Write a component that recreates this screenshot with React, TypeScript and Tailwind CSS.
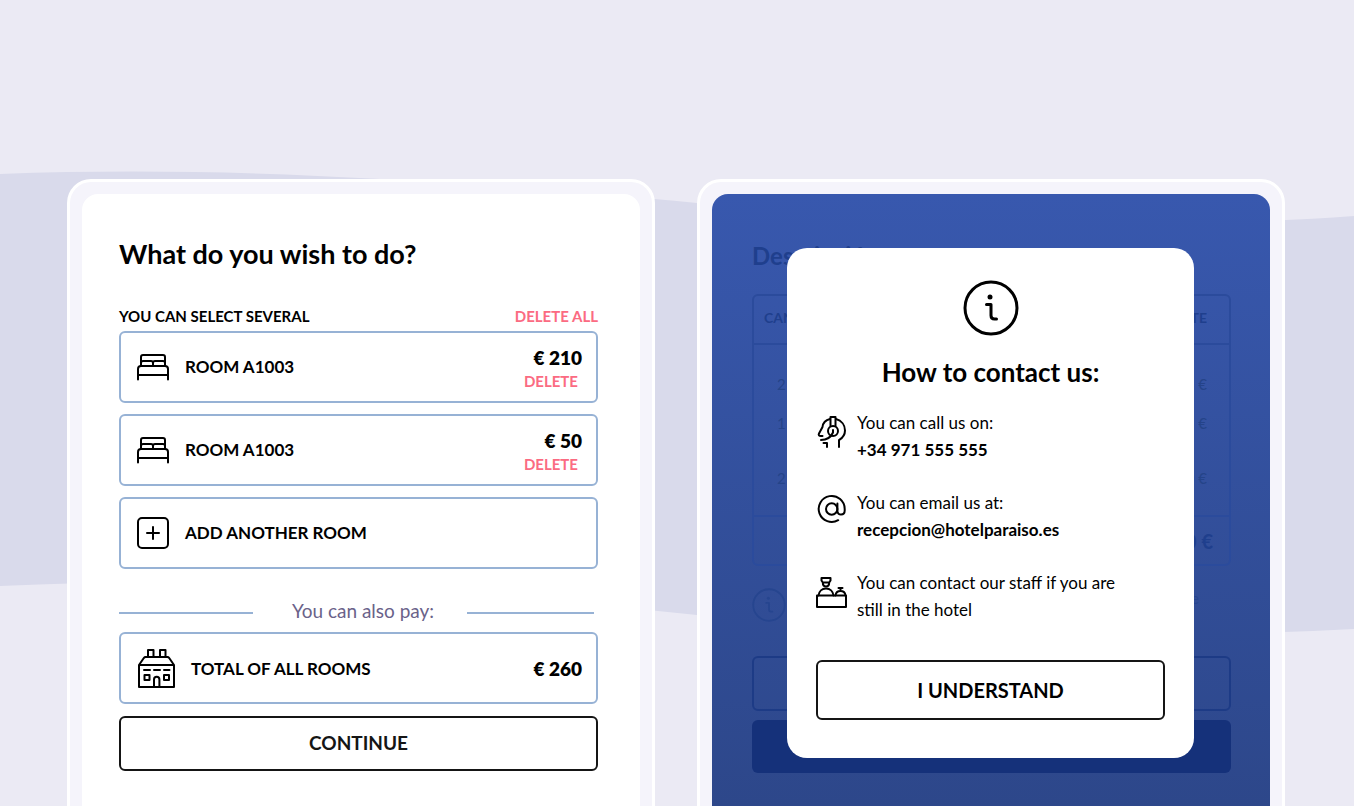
import React from "react";

type IconProps = { className?: string };

const stroke = {
  fill: "none",
  stroke: "currentColor",
  strokeWidth: 2,
  strokeLinecap: "round" as const,
  strokeLinejoin: "round" as const,
};

const BedIcon = ({ className }: IconProps) => (
  <svg viewBox="0 0 34 30" className={className} {...stroke} aria-hidden="true">
    <path d="M5 13.5V5a2 2 0 0 1 2-2h20a2 2 0 0 1 2 2v8.5" />
    <path d="M5 11a2 2 0 0 1 2-2h8a2 2 0 0 1 2 2v2.500M17 11a2 2 0 0 1 2-2h8a2 2 0 0 1 2 2" />
    <path d="M2 27.500V17a3 3 0 0 1 3-3h24a3 3 0 0 1 3 3v10.500M2 23h30" />
  </svg>
);

const HouseIcon = ({ className }: IconProps) => (
  <svg viewBox="0 0 42 42" className={className} {...stroke} aria-hidden="true">
    <path d="M3 17h35v22H3zM3 17l5-7.200a2 2 0 0 1 1.500-.8h22a2 2 0 0 1 1.500.8L38 17" />
    <path d="M12 9V2h5.500v7M24 9V2h5.500v7" />
    <path d="M8 22h6M18 22h6M28 22h5.500" />
    <path d="M8.500 27h5v5h-5zM28 27h5v5h-5z" />
    <path d="M18 39v-7.500a2.700 2.700 0 0 1 5.400 0V39" />
  </svg>
);

const HeadsetIcon = ({ className }: IconProps) => (
  <svg viewBox="0 0 32 36" className={className} {...stroke} aria-hidden="true">
    <path d="M14.500 13V4h5v9" />
    <circle cx="17" cy="18" r="5" />
    <path d="M17 17v2.500c-2 4.500-6.500 7.500-12 7.500" />
    <path d="M14 6C9.500 7 7 10 6.500 14L3 20.500c-.8 1.600 0 2.500 2 2.500h1.500" />
    <path d="M20 6c5.500 1.500 9 6 9 11.500 0 4.500-2.500 7.500-6 9.700V34" />
    <path d="M7.500 30H11v4" />
  </svg>
);

const AtIcon = ({ className }: IconProps) => (
  <svg viewBox="0 0 32 32" className={className} {...stroke} aria-hidden="true">
    <circle cx="15.700" cy="16" r="5.700" />
    <path d="M21.400 10.500V18c0 4.800 7.300 4.800 7.300-.5V16a13 13 0 1 0-6.500 11.200" />
  </svg>
);

const ReceptionIcon = ({ className }: IconProps) => (
  <svg viewBox="0 0 32 34" className={className} {...stroke} aria-hidden="true">
    <path d="M1 20.500h29V32H1z" />
    <path d="M5.500 3h9v2.500l-1.300 2H6.800l-1.300-2zM6.800 7.500c0 2.500 1.200 4 3.200 4s3.200-1.500 3.200-4" />
    <path d="M2.500 20.500c.5-4.200 3.500-7 7.500-7s7 2.800 7.500 7" />
    <path d="M19.500 20.500c.3-2.700 2-4.500 5-4.500s4.700 1.800 5 4.500M22.500 13h4M24.500 13v3" />
  </svg>
);

const InfoIcon = ({ className }: IconProps) => (
  <svg viewBox="0 0 56 56" className={className} {...stroke} strokeWidth={3} aria-hidden="true">
    <circle cx="28" cy="28" r="26" />
    <circle cx="27" cy="17" r="2.500" fill="currentColor" stroke="none" />
    <path d="M23.500 24.500H28v11c0 2.500 1 3.500 3.500 3.500h2" />
  </svg>
);

const PlusSquareIcon = ({ className }: IconProps) => (
  <svg viewBox="0 0 34 34" className={className} {...stroke} aria-hidden="true">
    <rect x="2" y="2" width="30" height="30" rx="4" />
    <path d="M17 11v12M11 17h12" />
  </svg>
);

const Waves = () => (
  <svg
    viewBox="0 0 1354 806"
    preserveAspectRatio="none"
    className="absolute inset-0 -z-10 h-full w-full"
    aria-hidden="true"
  >
    <path
      fill="#d9daeb"
      d="M0 174C130 169 260 172 380 179C500 186 600 194 697 203C900 221 1150 231 1354 216V629C1150 640 900 634 697 615C480 592 240 575 0 586Z"
    />
  </svg>
);

const Frame = ({ children }: { children: React.ReactNode }) => (
  <div className="flex min-w-0 flex-col rounded-t-3xl border-3 border-b-0 border-white bg-[#f5f4fb] px-3 pt-3">
    {children}
  </div>
);

const rooms = [
  { id: 1, name: "ROOM A1003", price: "€ 210" },
  { id: 2, name: "ROOM A1003", price: "€ 50" },
];

const lines = [
  { qty: "2", amount: "25 €", height: "h-[60px]" },
  { qty: "1", amount: "15 €", height: "h-[38px]" },
  { qty: "2", amount: "20 €", height: "h-[74px]" },
];

const RoomsPanel = () => (
  <main className="flex-1 rounded-t-2xl bg-white pt-11 pr-[42px] pl-[37px]">
    <h1 className="text-[27px] leading-8 font-bold">What do you wish to do?</h1>

    <div className="mt-9 flex items-center justify-between leading-5">
      <h2 className="text-[15px] leading-5 font-bold">YOU CAN SELECT SEVERAL</h2>
      <button className="text-[15px] font-bold text-[#fb6b82]">DELETE ALL</button>
    </div>

    <ul className="mt-[5px] flex flex-col gap-[11px]">
      {rooms.map((room) => (
        <li
          key={room.id}
          className="flex h-[72px] items-center rounded-md border-2 border-[#97b2d5] pr-[14px] pl-[15px]"
        >
          <BedIcon className="h-[30px] w-[34px]" />
          <span className="ml-[15px] text-[17px] font-bold">{room.name}</span>
          <div className="ml-auto flex flex-col items-end pt-1">
            <span className="text-[19px] leading-6 font-extrabold">{room.price}</span>
            <button className="mr-1 text-[15px] leading-[22px] font-bold text-[#fb6b82]">
              DELETE
            </button>
          </div>
        </li>
      ))}
      <li>
        <button className="flex h-[72px] w-full items-center rounded-md border-2 border-[#97b2d5] pl-[15px]">
          <PlusSquareIcon className="size-[34px]" />
          <span className="ml-[15px] text-[17px] font-bold">ADD ANOTHER ROOM</span>
        </button>
      </li>
    </ul>

    <div className="flex h-[63px] items-center pt-6 pr-1">
      <span className="h-0.5 w-[134px] bg-[#97b2d5]" />
      <span className="flex-1 pb-0.5 pl-1.5 text-center text-[19px] text-[#6a6289]">
        You can also pay:
      </span>
      <span className="h-0.5 w-[127px] bg-[#97b2d5]" />
    </div>

    <div className="flex h-[72px] items-center rounded-md border-2 border-[#97b2d5] pt-0.5 pr-[14px] pl-[15px]">
      <HouseIcon className="size-[42px]" />
      <span className="ml-[13px] text-[17px] font-bold">TOTAL OF ALL ROOMS</span>
      <span className="ml-auto text-[19px] font-extrabold">€ 260</span>
    </div>

    <button className="mt-3 h-[55px] w-full rounded-md border-2 border-[#151515] text-[19px] font-bold text-[#151515]">
      CONTINUE
    </button>
  </main>
);

// Breakdown screen that stays dimmed under the dialog
const BreakdownBackdrop = () => (
  <div className="pt-[46px] pr-[39px] pl-10 text-[#1f3f8d]">
    <h2 className="text-2xl leading-8 font-bold">Descripción</h2>
    <div className="mt-[22px] overflow-hidden rounded-md border-2 border-[#2b4b9c]">
      <table className="w-full border-collapse text-[15px]">
        <thead>
          <tr className="h-12 border-b-2 border-[#2b4b9c]">
            <th className="pb-1 pl-[10px] text-left text-sm font-bold">CANTIDAD</th>
            <th className="pr-[22px] pb-1 text-right text-sm font-bold">IMPORTE</th>
          </tr>
        </thead>
        <tbody className="text-[#254489]">
          {lines.map((line, i) => (
            <tr key={i} className={line.height}>
              <td className={`pl-[23px] ${i === 0 ? "pt-5" : ""}`}>{line.qty}</td>
              <td className={`pr-[22px] text-right ${i === 0 ? "pt-5" : ""}`}>{line.amount}</td>
            </tr>
          ))}
        </tbody>
        <tfoot>
          <tr className="h-12 border-t-2 border-[#2b4b9c]">
            <td />
            <td className="pr-4 text-right text-xl font-bold">60 €</td>
          </tr>
        </tfoot>
      </table>
    </div>
    <div className="mt-[22px] flex h-9 items-start justify-between pr-8 text-[#26458f]">
      <InfoIcon className="size-[34px]" />
      <span className="text-[15px] leading-5">importe</span>
    </div>
    <button
      aria-label="Back"
      className="mt-8 block h-[55px] w-full rounded-md border-2 border-[#1d3b86]"
    />
    <button aria-label="Pay" className="mt-[9px] block h-[53px] w-full rounded-md bg-[#15317a]" />
  </div>
);

const ContactDialog = () => (
  <section
    role="dialog"
    aria-labelledby="contact-title"
    className="absolute top-[54px] right-[76px] left-[75px] rounded-[20px] bg-white px-[29px] pt-8 pb-[38px]"
  >
    <InfoIcon className="mx-auto size-14" />
    <h2 id="contact-title" className="mt-5 text-center text-[26px] leading-8 font-bold">
      How to contact us:
    </h2>

    <ul className="mt-[21px] flex flex-col gap-[26px] text-[17px] leading-[27px]">
      <li className="flex gap-[9px]">
        <HeadsetIcon className="mt-1 h-9 w-8 shrink-0" />
        <p>
          You can call us on:
          <br />
          <a href="tel:+34971555555" className="font-bold">
            +34 971 555 555
          </a>
        </p>
      </li>
      <li className="flex gap-[9px]">
        <AtIcon className="mt-1 size-8 shrink-0" />
        <p>
          You can email us at:
          <br />
          <a href="mailto:recepcion@hotelparaiso.es" className="font-bold">
            recepcion@hotelparaiso.es
          </a>
        </p>
      </li>
      <li className="flex gap-[9px]">
        <ReceptionIcon className="mt-1.5 h-[34px] w-8 shrink-0" />
        <p className="max-w-[280px]">You can contact our staff if you are still in the hotel</p>
      </li>
    </ul>

    <button className="mt-[37px] h-[60px] w-full rounded-md border-2 border-[#151515] text-xl font-bold">
      I UNDERSTAND
    </button>
  </section>
);

export default function App() {
  return (
    <div className="relative isolate grid min-h-screen grid-cols-2 gap-[42px] bg-[#ebeaf4] pt-[179px] pr-[69px] pl-[67px] font-['Lato',sans-serif] text-black">
      <Waves />
      <Frame>
        <RoomsPanel />
      </Frame>
      <Frame>
        <div className="relative flex-1 rounded-t-2xl bg-linear-to-b from-[#3858ae] to-[#2d478a]">
          <BreakdownBackdrop />
          <ContactDialog />
        </div>
      </Frame>
    </div>
  );
}
